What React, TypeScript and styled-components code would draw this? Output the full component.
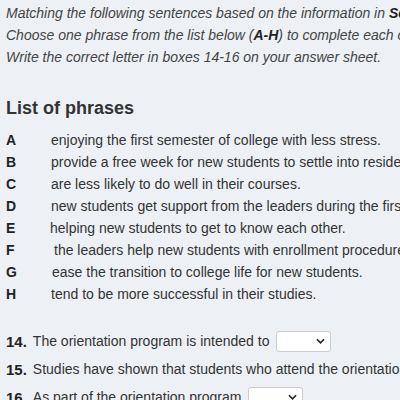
import React from 'react'
import styled, { createGlobalStyle } from 'styled-components'

const GlobalStyle = createGlobalStyle`
  html, body {
    margin: 0;
    padding: 0;
    background: #edf1f6;
  }
  body {
    font-family: "Liberation Sans", Arial, sans-serif;
    color: #333;
    overflow: hidden;
  }
`

const phrases = [
  { letter: 'A', text: 'enjoying the first semester of college with less stress.', shift: 0 },
  { letter: 'B', text: 'provide a free week for new students to settle into residence halls.', shift: 0 },
  { letter: 'C', text: 'are less likely to do well in their courses.', shift: 0 },
  { letter: 'D', text: 'new students get support from the leaders during the first week.', shift: 0 },
  { letter: 'E', text: 'helping new students to get to know each other.', shift: -1 },
  { letter: 'F', text: 'the leaders help new students with enrollment procedures.', shift: 3 },
  { letter: 'G', text: 'ease the transition to college life for new students.', shift: 1 },
  { letter: 'H', text: 'tend to be more successful in their studies.', shift: 0 },
]

const questions = [
  { num: '14.', text: 'The orientation program is intended to', select: true },
  { num: '15.', text: 'Studies have shown that students who attend the orientation program', select: false },
  { num: '16.', text: 'As part of the orientation program', select: true },
]

function App() {
  return (
    <Page>
      <GlobalStyle />
      <Instructions>
        <p>
          Matching the following sentences based on the information in <b>Section 3</b>.
        </p>
        <p>
          Choose one phrase from the list below (<b>A-H</b>) to complete each of the sentences.
        </p>
        <p>Write the correct letter in boxes 14-16 on your answer sheet.</p>
      </Instructions>

      <Heading>List of phrases</Heading>
      <PhraseList>
        {phrases.map((p) => (
          <PhraseRow key={p.letter}>
            <Letter>{p.letter}</Letter>
            <PhraseText $shift={p.shift}>{p.text}</PhraseText>
          </PhraseRow>
        ))}
      </PhraseList>

      <Questions>
        {questions.map((q) => (
          <QuestionRow key={q.num}>
            <QNum>{q.num}</QNum>
            <QText>{q.text}</QText>
            {q.select && (
              <Select>
                <Chevron viewBox="0 0 10 6">
                  <path d="M1 1l4 4 4-4" fill="none" stroke="#222" strokeWidth="1.8" />
                </Chevron>
              </Select>
            )}
          </QuestionRow>
        ))}
      </Questions>
    </Page>
  )
}

const Page = styled.div`
  padding: 2px 0 0 6px;
  white-space: nowrap;
  width: 394px;
  overflow: hidden;
`

const Instructions = styled.div`
  font-style: italic;
  font-size: 14px;
  line-height: 22px;
  color: #444;

  p {
    margin: 0;
  }

  b {
    color: #222;
  }
`

const Heading = styled.h2`
  margin: 28px 0 0;
  font-size: 18px;
  line-height: 24px;
  font-weight: bold;
  color: #333;
`

const PhraseList = styled.div`
  margin-top: 9px;
  display: flex;
  flex-direction: column;
`

const PhraseRow = styled.div`
  display: flex;
  font-size: 14px;
  line-height: 22px;
`

const Letter = styled.span`
  width: 45px;
  flex-shrink: 0;
  font-weight: bold;
  color: #222;
`

const PhraseText = styled.span<{ $shift: number }>`
  margin-left: ${(p) => p.$shift}px;
  color: #333;
`

const Questions = styled.div`
  margin-top: 25px;
  display: flex;
  flex-direction: column;
  gap: 6px;
`

const QuestionRow = styled.div`
  display: flex;
  align-items: center;
  height: 22px;
  font-size: 14px;
`

const QNum = styled.span`
  font-size: 15px;
  font-weight: bold;
  color: #222;
  margin-right: 6px;
`

const QText = styled.span`
  color: #333;
`

const Select = styled.div`
  margin-left: 7px;
  width: 55px;
  height: 21px;
  box-sizing: border-box;
  background: #fff;
  border: 1px solid #ccc;
  border-radius: 3px;
  display: flex;
  align-items: center;
  justify-content: flex-end;
  padding-right: 5px;
`

const Chevron = styled.svg`
  width: 9px;
  height: 6px;
`

export default App
